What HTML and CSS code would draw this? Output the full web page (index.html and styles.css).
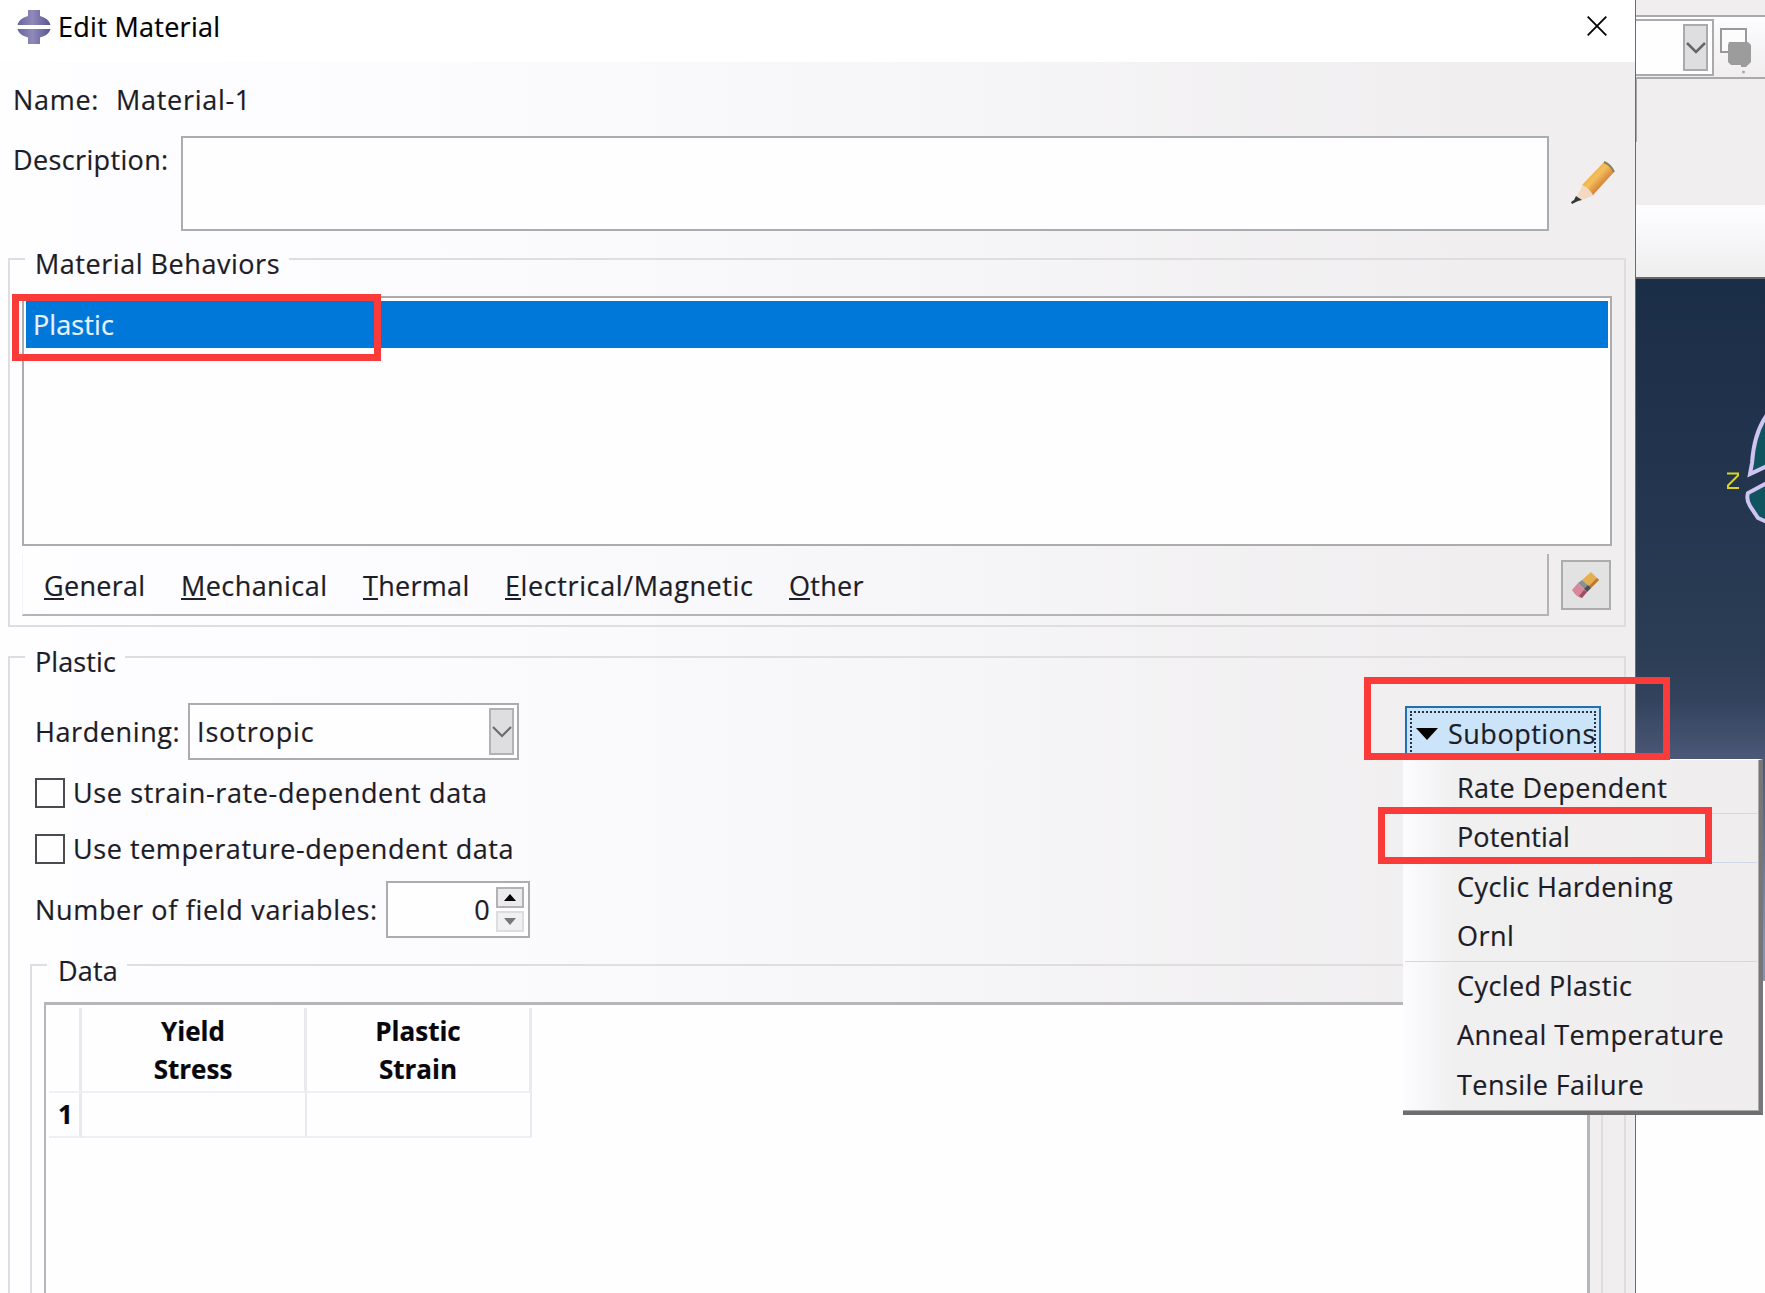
FILE: index.html
```
<!DOCTYPE html>
<html lang="en">
<head>
<meta charset="utf-8">
<title>Edit Material</title>
<link rel="stylesheet" href="styles.css">
</head>
<body>
<div class="screen">
  <main class="dialog">
    <header class="titlebar">
      <svg class="logo" width="34" height="36" viewBox="0 0 34 36">
        <defs>
          <linearGradient id="lg"><stop offset="0" stop-color="#6a6499"/><stop offset=".45" stop-color="#8f8aba"/><stop offset="1" stop-color="#5b558f"/></linearGradient>
        </defs>
        <path fill="url(#lg)" d="M11 1h12v6c6 1.500 9.500 5 10.500 9H.5C1.500 12 5 8.500 11 7z"/>
        <path fill="url(#lg)" d="M.5 20h33c-1 4-4.500 7-10.500 8.500V35H11v-6.500C5 27 1.500 24 .5 20z"/>
      </svg>
      <h1 class="title">Edit Material</h1>
      <svg class="close" width="20" height="20" viewBox="0 0 20 20"><path d="M.7.700l18.600 18.600M19.300.700L.7 19.300" stroke="#000" stroke-width="1.800"/></svg>
    </header>
    <div class="body">
      <div class="name-row"><span>Name:</span><span class="name-value">Material-1</span></div>
      <div class="desc-row">
        <span class="desc-label">Description:</span>
        <div class="desc-input"></div>
        <svg class="pencil" width="44" height="44" viewBox="0 0 44 44">
          <defs><linearGradient id="pg" x1="0" y1="0" x2="1" y2="1"><stop offset=".2" stop-color="#eda63a"/><stop offset=".45" stop-color="#f3bf5c"/><stop offset=".62" stop-color="#dd9040"/><stop offset=".8" stop-color="#b96436"/></linearGradient></defs>
          <path fill="#f3d9c4" d="M12 24L6 35l5 4 13-5z"/>
          <path fill="url(#pg)" d="M11 24L33 1q7 3 10 10L22 34q-4-7-11-10z"/>
          <path d="M33 1q7 3 10 10" fill="none" stroke="#8b8358" stroke-width="2"/>
          <path fill="#333a35" d="M5 35l6 4-4 1-6 3-1-2 3-2z"/>
        </svg>
      </div>

      <section class="group behaviors">
        <div class="legend"><span class="stub"></span><span class="legend-text wide">Material Behaviors</span><span class="rule"></span></div>
        <div class="list"><div class="list-row">Plastic</div></div>
        <div class="menu-row">
          <nav class="menubar">
            <span class="m1"><u>G</u>eneral</span><span class="m2"><u>M</u>echanical</span><span class="m3"><u>T</u>hermal</span><span class="m4"><u>E</u>lectrical/Magnetic</span><span class="m5"><u>O</u>ther</span>
          </nav>
          <div class="erase">
            <svg width="30" height="30" viewBox="0 0 30 30">
              <path fill="#e5ae50" d="M20 2l8 8-8 8-9-8z"/><path fill="#b97836" d="M28 10l-8 8-2-2 8-8z"/>
              <path fill="#8b8f94" d="M11 10l9 8-4 4-9-9z"/><path fill="#4c4e52" d="M20 18l-4 4-3-3 4-4z"/>
              <path fill="#d7889a" d="M7 13l9 9-5 6Q5 27 1 20z"/><path fill="#9c4f62" d="M16 22l-5 6-3-2 5-6z"/>
            </svg>
          </div>
        </div>
      </section>

      <section class="group plastic">
        <div class="legend"><span class="stub"></span><span class="legend-text tight">Plastic</span><span class="rule"></span></div>
        <div class="hard-row">
          <span class="hard-label">Hardening:</span>
          <div class="combo"><span>Isotropic</span><span class="combo-btn"><svg width="20" height="12" viewBox="0 0 20 12"><path d="M1 1l9 9 9-9" fill="none" stroke="#6c6c6c" stroke-width="2.200"/></svg></span></div>
          <div class="subopt"><div class="subopt-in"><svg width="22" height="12" viewBox="0 0 22 12"><path d="M0 0h22L11 12z"/></svg><span>Suboptions</span></div></div>
        </div>
        <div class="check-row"><span class="box"></span><span class="strain">Use strain-rate-dependent data</span></div>
        <div class="check-row second"><span class="box"></span><span class="temp">Use temperature-dependent data</span></div>
        <div class="num-row">
          <span class="num-label">Number of field variables:</span>
          <div class="spin"><span>0</span>
            <div class="spin-btns">
              <span class="up"><svg width="12" height="7" viewBox="0 0 12 7"><path d="M0 7h12L6 0z"/></svg></span>
              <span class="down"><svg width="12" height="7" viewBox="0 0 12 7"><path fill="#777" d="M0 0h12L6 7z"/></svg></span>
            </div>
          </div>
        </div>
        <section class="data">
          <div class="legend"><span class="stub"></span><span class="legend-text">Data</span><span class="rule"></span></div>
          <div class="sheet">
            <div class="grid">
              <span class="c head"></span><span class="c head">Yield<br>Stress</span><span class="c head">Plastic<br>Strain</span>
              <span class="c num">1</span><span class="c cell"></span><span class="c cell"></span>
            </div>
          </div>
        </section>
      </section>
    </div>
  </main>

  <aside class="app">
    <div class="strip"></div>
    <div class="toolbar">
      <div class="app-combo"><span class="app-btn"><svg width="20" height="12" viewBox="0 0 20 12"><path d="M1 1l9 9 9-9" fill="none" stroke="#666" stroke-width="2.600"/></svg></span></div>
      <svg class="shapes" width="34" height="48" viewBox="0 0 34 48"><path d="M2 2h25v23H2z" fill="#fcfcfd" stroke="#999" stroke-width="2"/><path d="M10 15h19l3 3v17l-3 3H12l-3-3V18z" fill="#9c9c9c"/><path d="M22 38h7l-2 2h-5z" fill="#9c9c9c"/><circle cx="24.500" cy="45" r="1.500" fill="#aaa"/></svg>
    </div>
    <div class="band"></div>
    <div class="context"></div>
    <div class="canvas">
      <svg width="129" height="700" viewBox="1636 280 129 700">
        <path d="M1767 416Q1754 434 1752 464L1750 475L1767 467z" fill="#10545f" stroke="#cfc4f2" stroke-width="4"/>
        <path d="M1767 484L1748 494Q1746 501 1750 507L1758 519L1767 523z" fill="#10545f" stroke="#cfc4f2" stroke-width="4"/>
        <path d="M1727 474.500h11v2l-10 10v2.500h11" fill="none" stroke="#d8d41f" stroke-width="2"/>
      </svg>
    </div>
    <div class="below"></div>
  </aside>

  <div class="popup">
    <div class="item">Rate Dependent</div>
    <div class="item sep tight">Potential</div>
    <div class="item sep">Cyclic Hardening</div>
    <div class="item">Ornl</div>
    <div class="item sep">Cycled Plastic</div>
    <div class="item">Anneal Temperature</div>
    <div class="item">Tensile Failure</div>
  </div>

  <div class="mark mark-plastic"></div>
  <div class="mark mark-sub"></div>
  <div class="mark mark-potential"></div>
</div>
</body>
</html>
```
FILE: styles.css
```
* { box-sizing: border-box; }
body { margin: 0; font: 27px/36px "Open Sans", "Noto Sans", sans-serif; letter-spacing: .43px; color: #1c1c26; -webkit-text-stroke: .2px; }
svg { display: block; flex: none; }
span { white-space: nowrap; }
.screen { position: relative; width: 1765px; height: 1293px; overflow: hidden; display: flex; background: #fefdff; }

.dialog { width: 1636px; height: 1293px; border-right: 1px solid #6b6b6b; display: flex; flex-direction: column; flex: none; }
.titlebar { height: 62px; flex: none; display: flex; align-items: flex-start; padding: 9px 28px 0 17px; background: #fff; }
.title { margin: 0 auto 0 7px; font-size: 27px; line-height: 36px; font-weight: 400; color: #000; letter-spacing: .28px; }
.close { margin-top: 7px; }
.body { flex: 1; display: flex; flex-direction: column; background: linear-gradient(90deg, #fefdff 0, #fbfafc 30%, #f5f4f6 62%, #f0eeef 90%); padding: 20px 9px 0 8px; }
.name-row { height: 36px; display: flex; padding-left: 5px; letter-spacing: .7px; }
.name-value { margin-left: 17px; }
.desc-row { display: flex; margin-top: 18px; height: 95px; padding-left: 5px; }
.desc-label { width: 168px; margin-top: 6px; letter-spacing: .36px; }
.desc-input { width: 1368px; height: 95px; border: 2px solid #acabad; background: #fefdff; }
.pencil { margin: 25px 0 0 22px; }

.legend { display: flex; height: 36px; }
.stub, .rule { height: 2px; background: #dfdde0; margin-top: 12px; }
.stub { width: 17px; }
.rule { flex: 1; }
.legend-text { padding: 0 9px 0 10px; }
.wide { letter-spacing: .54px; }
.tight { letter-spacing: .1px; }
.group { display: flex; flex-direction: column; width: 1618px; background: linear-gradient(#dfdde0, #dfdde0) 0 12px / 2px 100% no-repeat, linear-gradient(#dfdde0, #dfdde0) 100% 12px / 2px 100% no-repeat; }
.behaviors { margin-top: 15px; height: 381px; border-bottom: 2px solid #dfdde0; }
.list { margin: 14px 0 0 14px; width: 1590px; height: 250px; border: 2px solid #acabad; background: #fefdff; padding: 3px 2px; }
.list-row { height: 47px; background: #0078d9; color: #e8f3ff; padding: 6px 0 0 7px; letter-spacing: .1px; }
.menu-row { display: flex; margin: 8px 0 0 14px; }
.menubar { width: 1527px; height: 62px; border-right: 2px solid #b4b3b5; border-bottom: 2px solid #b4b3b5; border-left: 1px solid #f4f3f5; display: grid; grid-template-columns: 137px 182px 142px 284px 1fr; padding: 14px 0 0 21px; }
.menubar u { text-decoration: none; display: inline-block; height: 32px; border-bottom: 2px solid #20202a; line-height: 36px; }
.m1, .m3, .m5 { letter-spacing: .3px; }
.m4 { letter-spacing: .6px; }
.erase { margin: 6px 0 0 12px; width: 50px; height: 50px; border: 2px solid #acabad; background: #e3e2e3; display: grid; place-items: center; }

.plastic { margin-top: 17px; flex: 1; }
.hard-row { display: flex; height: 57px; margin-top: 23px; padding-left: 27px; align-items: center; }
.hard-label { width: 153px; letter-spacing: .6px; }
.combo { width: 331px; height: 57px; border: 2px solid #acabad; background: #fefdff; display: flex; justify-content: space-between; padding: 3px 3px 3px 7px; align-items: center; letter-spacing: .85px; }
.combo-btn { width: 25px; height: 47px; border: 2px solid #b2b1b3; background: #dedde0; display: grid; place-items: center; }
.subopt { margin: 5px 0 0 886px; width: 196px; height: 56px; border: 2px solid #2170b0; background: #cce4f9; padding: 3px; }
.subopt-in { height: 44px; border: 2px dotted #283040; display: flex; align-items: center; padding: 2px 0 0 4px; gap: 10px; letter-spacing: .5px; }
.check-row { display: flex; height: 30px; margin: 18px 0 0 27px; gap: 8px; align-items: center; }
.check-row.second { margin-top: 26px; }
.strain { letter-spacing: .63px; }
.temp { letter-spacing: .56px; }
.box { width: 30px; height: 30px; border: 2px solid #4c4b4e; background: #fefdff; }
.num-row { display: flex; height: 57px; margin: 17px 0 0 27px; align-items: center; }
.num-label { width: 351px; letter-spacing: .68px; }
.spin { width: 144px; height: 57px; border: 2px solid #acabad; background: #fefdff; display: flex; justify-content: flex-end; align-items: center; gap: 6px; padding-right: 4px; }
.spin-btns { display: flex; flex-direction: column; gap: 3px; }
.up, .down { width: 28px; height: 21px; border: 2px solid #b2b1b3; background: #eceaec; display: grid; place-items: center; }
.down { border-color: #dddcde; background: #f0eff1; }
.data { margin: 14px 0 0 22px; width: 1573px; flex: 1; display: flex; flex-direction: column; background: linear-gradient(#dfdde0, #dfdde0) 0 12px / 2px 100% no-repeat, linear-gradient(#dfdde0, #dfdde0) 100% 12px / 2px 100% no-repeat; }
.data .legend-text { padding: 1px 9px 0 11px; letter-spacing: .2px; }
.sheet { margin: 14px 0 0 14px; width: 1546px; flex: 1; border: 3px solid #b6b5b7; border-width: 3px 3px 0 2px; background: #fefdff; padding: 3px 0 0 3px; }
.grid { display: grid; grid-template-columns: 33px 225px 225px; grid-template-rows: 85px 45px; width: 483px; font-weight: 700; font-size: 26px; line-height: 38px; letter-spacing: 0; color: #08080c; text-align: center; }
.c { border-right: 3px solid #ebe9ec; border-bottom: 2px solid #f1eff2; }
.head { padding: 4px 0 0; }
.num { padding: 2px 0 0 3px; }
.cell { border-right-width: 2px; }

.app { flex: 1; display: flex; flex-direction: column; }
.strip { height: 15px; background: #f0eeef; }
.toolbar { height: 64px; border-top: 2px solid #aaa9ab; border-bottom: 2px solid #aaa9ab; background: linear-gradient(#fdfcfe, #f0eeef); display: flex; }
.app-combo { width: 78px; height: 57px; margin-top: 2px; border: 2px solid #aaa9ab; border-left: 0; background: #fefdff; display: flex; justify-content: flex-end; padding: 3px 4px 3px 0; }
.app-btn { width: 25px; height: 47px; border: 2px solid #aaa9ab; background: #dedde0; display: grid; place-items: center; }
.shapes { margin: 10px 0 0 5px; }
.band { height: 126px; background: linear-gradient(#a9a8aa, #a9a8aa) 0 0 / 1px 63px no-repeat #f0eeef; }
.context { height: 74px; background: linear-gradient(#fefdff, #efeeef); border-bottom: 2px solid #68666a; }
.canvas { height: 702px; background: linear-gradient(#1b2e47 0, #22334d 25%, #2c3d56 54%, #33435d 60%, #4a5777 68%, #8493b7 95%); overflow: hidden; }
.below { flex: 1; background: #fefdff; }

.popup { position: absolute; left: 1403px; top: 759px; width: 360px; height: 356px; border-right: 4px solid #777678; border-bottom: 4px solid #6e6d6f; border-top: 1px solid #fff; box-shadow: inset -1px -1px #aaa; padding: 3px 2px 0; background: linear-gradient(90deg, #fcfbfe 0, #f1f0f1 14%, #efedee 100%); }
.item { height: 49.600px; padding: 5.500px 0 0 52px; border-top: 1px solid transparent; white-space: nowrap; }
.sep { border-top-color: #cfd8e6; }

.mark { position: absolute; border: 7px solid #fb3a3a; }
.mark-plastic { left: 12px; top: 294px; width: 369px; height: 67px; }
.mark-sub { left: 1364px; top: 677px; width: 306px; height: 83px; }
.mark-potential { left: 1378px; top: 807px; width: 334px; height: 57px; }
```
